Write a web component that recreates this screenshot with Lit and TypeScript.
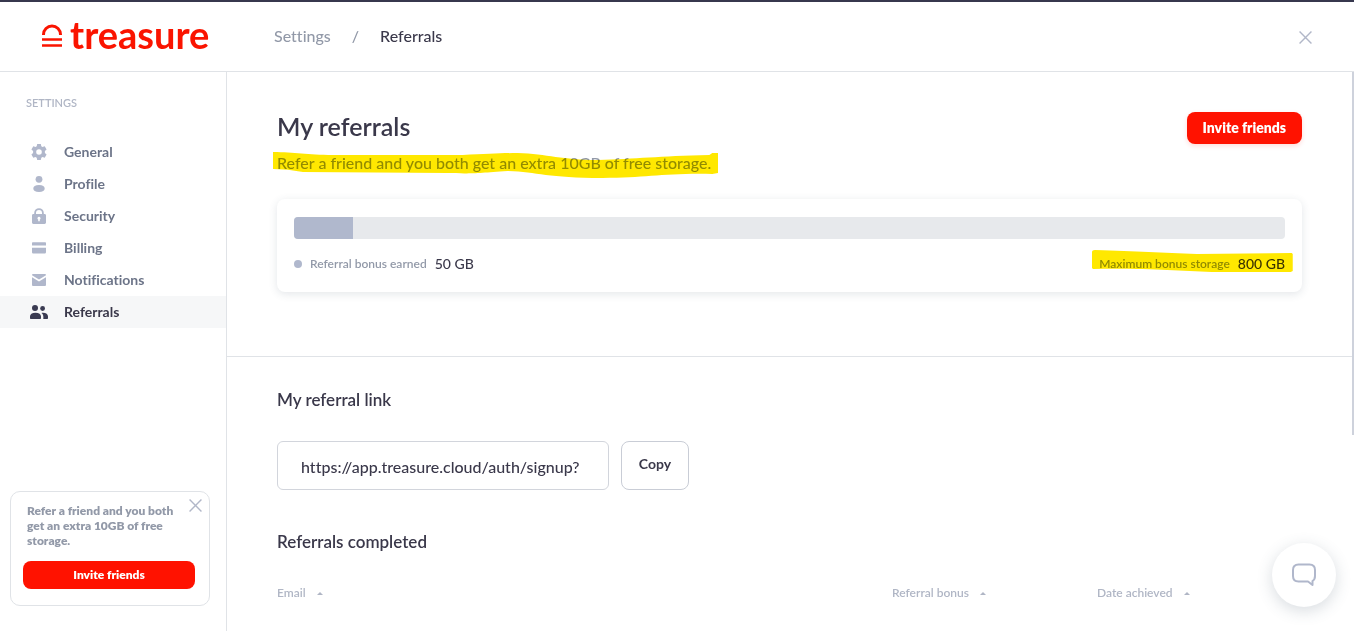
import { LitElement, html, css, svg } from "lit";
import { customElement, state } from "lit/decorators.js";
import { classMap } from "lit/directives/class-map.js";
import { styleMap } from "lit/directives/style-map.js";

const icons = {
  general: svg`<path fill-rule="evenodd" d="M7.200 1h3.600l.5 2.200 1.200.7 2.200-.7 1.900 3.200-1.700 1.500v2.200l1.700 1.500-1.900 3.200-2.200-.7-1.200.7-.5 2.200H7.200l-.5-2.200-1.200-.7-2.200.7-1.900-3.200 1.700-1.500V7.900L1.400 6.400l1.900-3.200 2.200.7 1.200-.7zM9 6.200a2.800 2.800 0 1 0 0 5.600 2.800 2.800 0 0 0 0-5.600z"/>`,
  profile: svg`<circle cx="9" cy="4.300" r="3.400"/><path d="M3.300 13.500c0-2.200 2-3.600 5.700-3.600s5.700 1.400 5.700 3.600S12.700 17 9 17s-5.700-1.300-5.700-3.500z"/>`,
  security: svg`<path fill-rule="evenodd" d="M4.200 7V6a4.800 4.800 0 0 1 9.600 0v1h.8c.8 0 1.400.6 1.400 1.400v7.200c0 .8-.6 1.400-1.400 1.400H3.400c-.8 0-1.400-.6-1.400-1.400V8.400C2 7.600 2.600 7 3.400 7zM6 7h6V6a3 3 0 0 0-6 0zM9 9.800a1.500 1.500 0 0 0-.8 2.800V14.300h1.600v-1.700A1.500 1.500 0 0 0 9 9.800z"/>`,
  billing: svg`<path d="M3 3.300h12c.6 0 1 .4 1 1V6.500H2V4.300c0-.6.400-1 1-1zM2 8.800h14v4.200c0 1-.6 1.600-1.600 1.600H3.600C2.600 14.600 2 14 2 13z"/>`,
  notifications: svg`<path d="M2 4.200C2 3.500 2.500 3 3.200 3h11.600c.7 0 1.200.5 1.200 1.200L9 8.600zM2 6.200l7 4.300 7-4.300v7.500c0 .8-.5 1.300-1.300 1.300H3.300C2.500 15 2 14.500 2 13.700z"/>`,
  referrals: svg`<circle cx="5" cy="5" r="3"/><circle cx="12.600" cy="5.500" r="2.400"/><path d="M0 13.600C0 11.300 2 9.700 5.500 9.700S11 11.300 11 13.600V15c0 .6-.4 1-1 1H1c-.6 0-1-.4-1-1zM11.500 9.900c4.300-.4 6.500 1.100 6.500 3.700V15c0 .6-.4 1-1 1h-3.700c.3-3 0-4.800-1.800-6.100z"/>`,
};

type IconName = keyof typeof icons;

const navItems: { label: string; icon: IconName }[] = [
  { label: "General", icon: "general" },
  { label: "Profile", icon: "profile" },
  { label: "Security", icon: "security" },
  { label: "Billing", icon: "billing" },
  { label: "Notifications", icon: "notifications" },
  { label: "Referrals", icon: "referrals" },
];

const closeIcon = html`<svg class="close-icon" viewBox="0 0 12 12" aria-hidden="true">
  <path d="M.5.5l11 11M11.500.5l-11 11" fill="none" stroke="currentColor" stroke-width="1.300" />
</svg>`;

@customElement("app-root")
export class AppRoot extends LitElement {
  @state() private active = "Referrals";
  private earned = 50;
  private share = 6;

  static styles = css`
    :host {
      display: flex;
      flex-direction: column;
      height: 100vh;
      box-sizing: border-box;
      border-top: 2px solid #37384e;
      background: #fff;
      color: #3a384a;
      font-family: Lato, "Liberation Sans", sans-serif;
      font-size: 16px;
      font-weight: 500;
      line-height: 24px;
      font-variant-ligatures: none;
      overflow: hidden;
    }
    *, *::before, *::after { box-sizing: border-box; }
    a { color: inherit; text-decoration: none; }
    button { font-family: inherit; cursor: pointer; }
    h1, h2, p { margin: 0; }

    header {
      display: flex;
      align-items: center;
      height: 70px;
      flex: none;
      padding: 0 42px 0 41px;
      border-bottom: 1px solid #e0e3e7;
    }
    .logo {
      display: flex;
      align-items: center;
      gap: 7px;
      width: 233px;
      padding-bottom: 6px;
      color: #fa1400;
      font-size: 38px;
      line-height: 40px;
      font-weight: 700;
    }
    .logo svg { width: 22px; height: 24px; margin-top: 4px; }
    .crumbs { display: flex; gap: 21px; flex: 1; padding-bottom: 2px; color: #9299a8; }
    .crumbs .current { color: #3a384a; }
    .icon-button {
      display: flex;
      padding: 0;
      border: 0;
      background: none;
      color: #b1b7c8;
    }
    header .icon-button { margin-top: 2px; }
    .close-icon { width: 13px; height: 13px; }

    .body { display: flex; flex: 1; min-height: 0; }
    aside {
      display: flex;
      flex-direction: column;
      justify-content: space-between;
      width: 227px;
      flex: none;
      border-right: 1px solid #e0e3e7;
      padding: 23px 0 25px;
    }
    .group {
      padding-left: 26px;
      margin-bottom: 25px;
      color: #b0b6c5;
      font-size: 11px;
      line-height: 16px;
      font-weight: 600;
    }
    .nav-link {
      display: flex;
      align-items: center;
      gap: 16px;
      height: 32px;
      padding-left: 30px;
      color: #6c7488;
      font-size: 14px;
      font-weight: 700;
    }
    .nav-link svg { width: 18px; height: 18px; fill: #b0b7cb; }
    .nav-link.active { background: #f6f7f8; color: #3a384a; }
    .nav-link.active svg { fill: #3a3b52; }

    .promo {
      position: relative;
      margin: 0 16px 0 10px;
      padding: 11px 14px 16px 12px;
      border: 1px solid #e0e3e7;
      border-radius: 10px;
    }
    .promo p {
      margin: 0 12px 13px 4px;
      color: #9299a8;
      font-size: 12px;
      line-height: 15px;
      font-weight: 800;
    }
    .promo .icon-button { position: absolute; top: 7px; right: 7px; }
    .primary {
      border: 0;
      border-radius: 8px;
      background: #ff1200;
      color: #fff;
      font-size: 14px;
      font-weight: 800;
    }
    .promo .primary { width: 100%; height: 28px; padding: 0 0 2px; font-size: 12px; }
    .top .primary { height: 32px; padding: 0 16px 2px; box-shadow: 0 2px 5px #ff120026; }

    main { position: relative; flex: 1; min-width: 0; overflow: hidden; }
    .thumb {
      position: absolute;
      top: 0;
      right: 0;
      width: 2px;
      height: 65%;
      background: #ced2dc;
    }
    section { padding: 0 52px 0 50px; }
    .overview { padding-top: 39px; padding-bottom: 64px; border-bottom: 1px solid #e0e3e7; }
    .top { display: flex; justify-content: space-between; align-items: flex-start; }
    h1 { font-size: 25px; line-height: 30px; font-weight: 600; margin-bottom: 10px; }
    .lead { color: #9299a8; }
    .marked { position: relative; }
    .marked svg {
      position: absolute;
      mix-blend-mode: multiply;
      fill: #ffe800;
      pointer-events: none;
    }
    .lead svg { left: -4px; top: 1px; width: calc(100% + 11px); height: 28px; }
    .card {
      margin-top: 24px;
      padding: 18px 17px 16px;
      border-radius: 8px;
      box-shadow: 0 2px 8px #3c506424;
    }
    .track { height: 22px; border-radius: 4px; background: #e7e9ec; overflow: hidden; }
    .fill { height: 100%; background: #b0b8cd; }
    .legend {
      display: flex;
      justify-content: space-between;
      margin-top: 13px;
      font-size: 12px;
      font-weight: 600;
      color: #9299a8;
    }
    .legend span { display: flex; align-items: center; gap: 8px; }
    .legend strong { color: #3a384a; font-size: 14px; font-weight: 500; }
    .legend .dot { width: 8px; height: 8px; border-radius: 50%; background: #b0b8cd; }
    .legend svg { left: -7px; top: -2px; width: calc(100% + 15px); height: 22px; }

    .top .primary { margin-top: 1px; }
    .details { padding-top: 31px; }
    h2 { font-size: 17px; line-height: 24px; font-weight: 600; }
    .link-row { display: flex; gap: 12px; margin: 29px 0 40px; }
    .link-row input {
      width: 332px;
      height: 49px;
      padding: 2px 22px 0 23px;
      border: 1px solid #d2d5dc;
      border-radius: 6px;
      background: #fff;
      color: #3a384a;
      font: inherit;
    }
    .copy {
      width: 68px;
      padding: 0 0 4px;
      border: 1px solid #c9cdd6;
      border-radius: 8px;
      background: #fff;
      color: #3a384a;
      font-size: 14px;
      font-weight: 700;
    }
    table { width: 100%; margin-top: 27px; border-collapse: collapse; table-layout: fixed; }
    th {
      padding: 0;
      text-align: left;
      color: #b0b6c5;
      font-size: 12px;
      font-weight: 600;
    }
    .email { width: 60%; }
    .caret {
      display: inline-block;
      margin-left: 8px;
      border: 3px solid transparent;
      border-top: 0;
      border-bottom-color: #b0b6c5;
      vertical-align: middle;
    }
    .chat {
      position: fixed;
      right: 18px;
      bottom: 24px;
      display: grid;
      place-items: center;
      width: 64px;
      height: 64px;
      border: 0;
      border-radius: 50%;
      background: #fff;
      box-shadow: 0 4px 16px #3c506433;
    }
    .chat svg { width: 26px; height: 24px; fill: none; stroke: #b0b7cb; stroke-width: 2; }
  `;

  render() {
    return html`
      <header>
        <a class="logo" href="#">
          <svg viewBox="0 0 22 24" aria-hidden="true" fill="none" stroke="currentColor">
            <path d="M2.500 11V10.500a8.500 8.500 0 0 1 17 0v.5" stroke-width="3" />
            <path d="M1 15.500h20M1 21.500h20" stroke-width="2.600" />
          </svg>
          treasure
        </a>
        <nav class="crumbs" aria-label="Breadcrumb">
          <a href="#">Settings</a><span>/</span><span class="current">Referrals</span>
        </nav>
        <button class="icon-button" aria-label="Close">${closeIcon}</button>
      </header>
      <div class="body">
        <aside>
          <nav aria-label="Settings">
            <div class="group">SETTINGS</div>
            ${navItems.map(
              (item) => html`<a
                href="#"
                class=${classMap({ "nav-link": true, active: item.label === this.active })}
                @click=${() => (this.active = item.label)}
                ><svg viewBox="0 0 18 18" aria-hidden="true">${icons[item.icon]}</svg>${item.label}</a
              >`,
            )}
          </nav>
          <div class="promo">
            <p>Refer a friend and you both get an extra 10GB of free storage.</p>
            <button class="icon-button" aria-label="Dismiss">${closeIcon}</button>
            <button class="primary">Invite friends</button>
          </div>
        </aside>
        <main>
          <section class="overview">
            <div class="top">
              <div>
                <h1>My referrals</h1>
                <p class="lead marked">
                  Refer a friend and you both get an extra 10GB of free storage.
                  <svg viewBox="0 0 446 28" preserveAspectRatio="none" aria-hidden="true">
                    <path d="M0 0C22 0 34 3 60 3H190C215 2 230 1 245 1C275 2 290 8 325 8C365 7 385 4 437 3L440 1H446V21L440 22C390 21 375 26 330 26C275 26 265 20 235 19C205 21 200 22 175 21L30 20Q15 17 0 17Z" />
                  </svg>
                </p>
              </div>
              <button class="primary">Invite friends</button>
            </div>
            <div class="card">
              <div class="track"><div class="fill" style=${styleMap({ width: `${this.share}%` })}></div></div>
              <div class="legend">
                <span><i class="dot"></i>Referral bonus earned <strong>${this.earned} GB</strong></span>
                <span class="marked"
                  >Maximum bonus storage <strong>800 GB</strong>
                  <svg viewBox="0 0 201 22" preserveAspectRatio="none" aria-hidden="true">
                    <path d="M0 2Q0 0 3 0C45 1 70 3 105 4L200 3L201 4V21L199 22H120C85 21 55 18 1 19L0 18Z" />
                  </svg>
                </span>
              </div>
            </div>
          </section>
          <section class="details">
            <h2 id="link-title">My referral link</h2>
            <div class="link-row">
              <input aria-labelledby="link-title" readonly value="https://app.treasure.cloud/auth/signup?" />
              <button class="copy">Copy</button>
            </div>
            <h2>Referrals completed</h2>
            <table>
              <thead>
                <tr>
                  <th class="email">Email <i class="caret"></i></th>
                  <th>Referral bonus <i class="caret"></i></th>
                  <th>Date achieved <i class="caret"></i></th>
                </tr>
              </thead>
            </table>
          </section>
          <div class="thumb"></div>
        </main>
      </div>
      <button class="chat" aria-label="Open chat">
        <svg viewBox="0 0 26 24" aria-hidden="true">
          <path d="M7.500 1.500h11q5.500 0 5.500 5.500v6q0 3.500-2.500 5v4l-4.500-3.500H7.500Q2 18.500 2 13V7q0-5.500 5.500-5.500z" stroke-linejoin="round" />
        </svg>
      </button>
    `;
  }
}
